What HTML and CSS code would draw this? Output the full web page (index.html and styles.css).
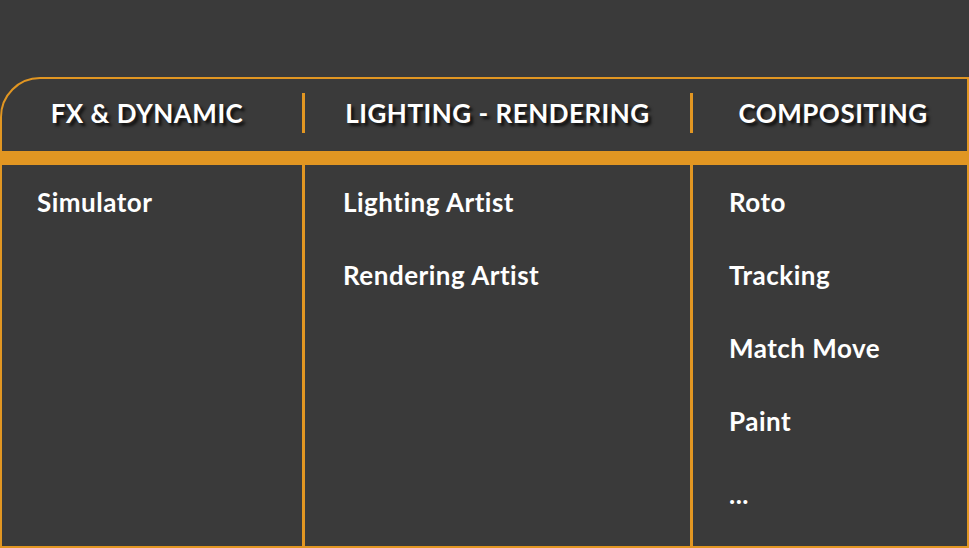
FILE: index.html
```html
<!DOCTYPE html>
<html lang="en">
<head>
<meta charset="utf-8">
<title>Departments</title>
<link rel="stylesheet" href="styles.css">
</head>
<body>
<div class="board">
  <div class="head">
    <div class="head-cell c1">FX &amp; DYNAMIC</div>
    <div class="head-sep"></div>
    <div class="head-cell c2">LIGHTING - RENDERING</div>
    <div class="head-sep"></div>
    <div class="head-cell c3">COMPOSITING</div>
  </div>
  <div class="bar"></div>
  <div class="body">
    <ul class="col c1">
      <li>Simulator</li>
    </ul>
    <ul class="col c2">
      <li>Lighting Artist</li>
      <li>Rendering Artist</li>
    </ul>
    <ul class="col c3">
      <li>Roto</li>
      <li>Tracking</li>
      <li>Match Move</li>
      <li>Paint</li>
      <li>...</li>
    </ul>
  </div>
</div>
</body>
</html>
```

FILE: styles.css
```css
html, body {
  margin: 0;
  padding: 0;
  background: #3a3a3a;
  height: 100%;
  overflow: hidden;
}
body {
  font-family: Lato, "Open Sans", "DejaVu Sans", sans-serif;
  color: #ffffff;
}
.board {
  margin-top: 77px;
  height: 471px;
  box-sizing: border-box;
  border: 2px solid #e19622;
  border-top-left-radius: 40px;
  display: flex;
  flex-direction: column;
}
.head {
  height: 72px;
  display: flex;
  align-items: center;
}
.head-cell {
  text-align: center;
  font-weight: 700;
  font-size: 26px;
  letter-spacing: 0.5px;
  text-shadow: 3px 3px 3px rgba(0, 0, 0, 0.75);
  padding-bottom: 5px;
  box-sizing: border-box;
}
.head-cell.c1 { padding-left: 0; padding-right: 10px; }
.head-cell.c3 { padding-left: 6px; }
.head-sep {
  width: 3px;
  height: 40px;
  background: #e19622;
  margin-top: -4px;
}
.c1 { width: 300px; }
.c2 { width: 385px; }
.c3 { flex: 1; }
.bar {
  height: 14px;
  background: #e19622;
}
.body {
  flex: 1;
  display: flex;
}
.col {
  list-style: none;
  margin: 0;
  padding: 21px 0 0 35px;
  display: flex;
  flex-direction: column;
  gap: 41px;
  font-weight: 700;
  font-size: 26px;
  letter-spacing: 0.5px;
  line-height: 32px;
  box-sizing: border-box;
}
.col.c2, .col.c3 {
  border-left: 3px solid #e19622;
}
.col.c2 { width: 388px; padding-left: 38px; }
.col.c3 { padding-left: 36px; }
```
